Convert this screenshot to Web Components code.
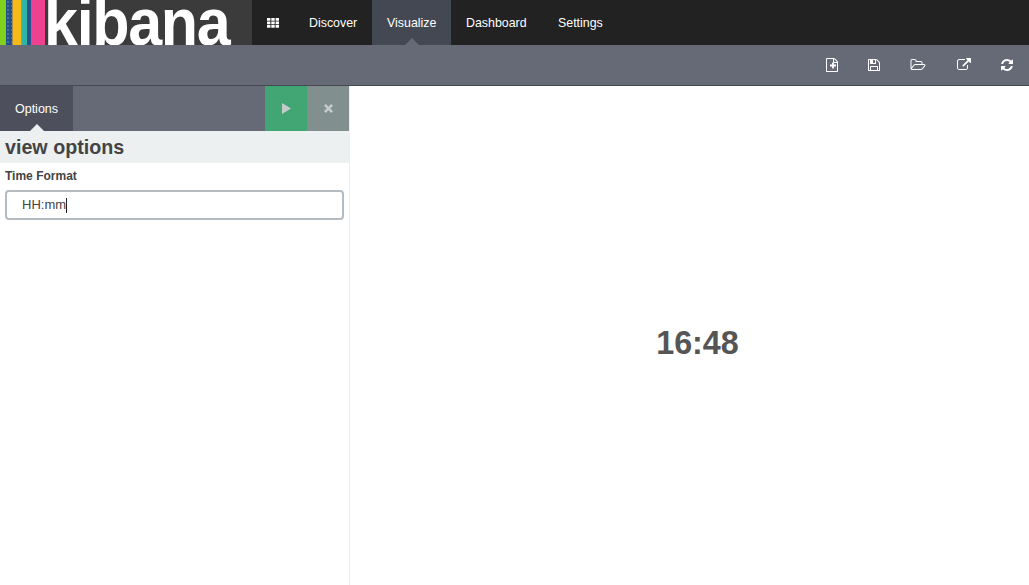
<!DOCTYPE html>
<html>
<head>
<meta charset="utf-8">
<title>Kibana</title>
<style>
  html, body { margin: 0; height: 100%; overflow: hidden; }
  body { font-family: "Liberation Sans", Arial, sans-serif; font-size: 13px; color: #444; background: #fff; }
</style>
</head>
<body>
<kbn-app>
  <kbn-navbar slot="top">
    <kbn-nav-link style="width:48px">Discover</kbn-nav-link>
    <kbn-nav-link style="width:49px" active>Visualize</kbn-nav-link>
    <kbn-nav-link style="width:62px">Dashboard</kbn-nav-link>
    <kbn-nav-link style="width:45px">Settings</kbn-nav-link>
  </kbn-navbar>
  <kbn-toolbar slot="top"></kbn-toolbar>
  <kbn-sidebar slot="side">
    <kbn-field label="Time Format" value="HH:mm"></kbn-field>
  </kbn-sidebar>
  <kbn-metric slot="main">16:48</kbn-metric>
</kbn-app>

<script>
  // toolbar glyphs, 1792 units high, width comes from the viewBox
  const ICONS = {
    add: { w: 1792, d: `<path d="M1596 380q28 28 48 76t20 88v1152q0 40-28 68t-68 28h-1344q-40 0-68-28t-28-68v-1600q0-40 28-68t68-28h896q40 0 88 20t76 48zm-444-244v376h376q-10-29-22-41l-313-313q-12-12-41-22zm384 1528v-1024h-416q-40 0-68-28t-28-68v-416h-768v1536h1280z"/><path d="M910 576h230v270h270v230h-270v270H910v-270H640V846h270z"/>` },
    save: { w: 1792, d: `<path d="M512 1536h768v-384h-768v384zm896 0h128v-896q0-14-10-38.5t-20-34.5l-281-281q-10-10-34-20t-39-10v416q0 40-28 68t-68 28h-576q-40 0-68-28t-28-68v-416h-128v1280h128v-416q0-40 28-68t68-28h832q40 0 68 28t28 68v416zm-384-928v-320q0-13-9.5-22.5t-22.5-9.5h-192q-13 0-22.5 9.5t-9.5 22.5v320q0 13 9.5 22.5t22.5 9.5h192q13 0 22.5-9.5t9.5-22.5zm640 32v928q0 40-28 68t-68 28h-1344q-40 0-68-28t-28-68v-1344q0-40 28-68t68-28h928q40 0 88 20t76 48l280 280q28 28 48 76t20 88z"/>` },
    open: { w: 2048, d: `<path d="M1845 931q0-35-53-35h-1088q-40 0-85.5 21.5t-71.5 52.5l-294 363q-18 24-18 40 0 35 53 35h1088q40 0 86-22t71-53l294-363q18-22 18-39zm-1141-163h768v-160q0-40-28-68t-68-28h-576q-40 0-68-28t-28-68v-64q0-40-28-68t-68-28h-320q-40 0-68 28t-28 68v853l256-315q44-53 116-87.5t140-34.5zm1269 163q0 62-46 120l-295 363q-43 53-116 87.5t-140 34.5h-1088q-92 0-158-66t-66-158v-960q0-92 66-158t158-66h320q92 0 158 66t66 158v32h544q92 0 158 66t66 158v160h192q54 0 99 24.5t67 70.5q15 32 15 68z"/>` },
    share: { w: 1792, d: `<path d="M1408 928v320q0 119-84.5 203.5t-203.5 84.5h-832q-119 0-203.5-84.5t-84.5-203.5v-832q0-119 84.5-203.5t203.5-84.5h704q14 0 23 9t9 23v64q0 14-9 23t-23 9h-704q-66 0-113 47t-47 113v832q0 66 47 113t113 47h832q66 0 113-47t47-113v-320q0-14 9-23t23-9h64q14 0 23 9t9 23zm384-864v512q0 26-19 45t-45 19-45-19l-176-176-652 652q-10 10-23 10t-23-10l-114-114q-10-10-10-23t10-23l652-652-176-176q-19-19-19-45t19-45 45-19h512q26 0 45 19t19 45z"/>` },
    reload: { w: 1792, d: `<path d="M1639 1056q0 5-1 7-64 268-268 434.5t-478 166.5q-146 0-282.5-55t-243.5-157l-129 129q-19 19-45 19t-45-19-19-45v-448q0-26 19-45t45-19h448q26 0 45 19t19 45-19 45l-137 137q71 66 161 102t187 36q134 0 250-65t186-179q11-17 53-117 8-23 30-23h192q13 0 22.5 9.5t9.5 22.5zm25-800v448q0 26-19 45t-45 19h-448q-26 0-45-19t-19-45 19-45l138-138q-148-137-349-137-134 0-250 65t-186 179q-11 17-53 117-8 23-30 23h-199q-13 0-22.5-9.5t-9.5-22.5v-7q65-268 270-434.5t480-166.5q146 0 284 55.5t245 156.5l130-129q19-19 45-19t45 19 19 45z"/>` }
  };

  customElements.define("kbn-icon", class KbnIcon extends HTMLElement {
    connectedCallback() {
      const icon = ICONS[this.getAttribute("name")];
      this.attachShadow({mode: "open"});
      this.shadowRoot.innerHTML = `
        <style>:host { display: block; }
        svg { display: block; fill: currentColor; }</style>
        <svg width="${icon.w / 128}" height="14" viewBox="0 0 ${icon.w} 1792">${icon.d}</svg>`;
    }
  });

  customElements.define("kbn-app", class KbnApp extends HTMLElement {
    constructor() {
      super();
      this.attachShadow({mode: "open"});
      this.shadowRoot.innerHTML = `
        <style>
          :host { display: flex; flex-direction: column; height: 585px; }
          .body { flex: 1; display: flex; min-height: 0; }
        </style>
        <slot name="top"></slot>
        <div class="body">
          <slot name="side"></slot>
          <slot name="main"></slot>
        </div>`;
    }
  });

  customElements.define("kbn-navbar", class KbnNavbar extends HTMLElement {
    constructor() {
      super();
      this.attachShadow({mode: "open"});
      this.shadowRoot.innerHTML = `
        <style>
          :host { display: flex; height: 45px; background: #222; flex: none; }
          .logo {
            width: 252px; height: 45px; overflow: hidden; display: flex; background: #3b3b3b;
          }
          .stripes { width: 45px; flex: none; display: flex; }
          .stripes i { display: block; height: 45px; }
          .stripes .dots {
            background-color: #22508a;
            background-image: radial-gradient(circle, #5f83ad 0.5px, transparent 1px);
            background-size: 4px 4px;
          }
          .word {
            display: block; font: bold 61px/45px "Liberation Sans", Arial, sans-serif; color: #fff;
            letter-spacing: -1.3px; height: 45px; margin: 2px 0 0 -1px;
            transform: scaleY(1.08); transform-origin: 0 100%;
          }
          .apps { width: 42px; display: flex; align-items: center; justify-content: center; }
          .apps svg { display: block; fill: #fff; }
          nav { display: flex; }
        </style>
        <div class="logo">
          <div class="stripes">
            <i style="width:6px;background:#80d01c"></i>
            <i class="dots" style="width:6px"></i>
            <i style="width:1px;background:#a58a45"></i>
            <i style="width:8px;background:#f5b91a"></i>
            <i style="width:1px;background:#7fa56a"></i>
            <i style="width:5px;background:#2fb5a6"></i>
            <i style="width:4px;background:#27548c"></i>
            <i style="width:14px;background:#ee4290"></i>
          </div>
          <span class="word">kibana</span>
        </div>
        <div class="apps">
          <svg width="12" height="10" viewBox="0 0 12 10">
            <path d="M0 0h3.4v2.8H0zM4.3 0h3.4v2.8H4.3zM8.6 0H12v2.8H8.6zM0 3.5h3.4v2.8H0zM4.3 3.5h3.4v2.8H4.3zM8.6 3.5H12v2.8H8.6zM0 7h3.4v2.8H0zM4.3 7h3.4v2.8H4.3zM8.6 7H12v2.8H8.6z"/>
          </svg>
        </div>
        <nav><slot></slot></nav>`;
    }
  });

  customElements.define("kbn-nav-link", class KbnNavLink extends HTMLElement {
    constructor() {
      super();
      this.attachShadow({mode: "open"});
      this.shadowRoot.innerHTML = `
        <style>
          :host {
            display: block; position: relative; padding: 0 15px; height: 45px; line-height: 46px;
            font-size: 12.4px; color: #fff; cursor: pointer; white-space: nowrap;
          }
          :host([active]) { background: #444852; }
          :host([active])::after {
            content: ""; position: absolute; left: 50%; bottom: 0; margin-left: -7px;
            border: 7px solid transparent; border-top: 0; border-bottom-color: #656a76;
          }
        </style>
        <slot></slot>`;
    }
  });

  customElements.define("kbn-toolbar", class KbnToolbar extends HTMLElement {
    constructor() {
      super();
      this.attachShadow({mode: "open"});
      this.shadowRoot.innerHTML = `
        <style>
          :host {
            display: flex; justify-content: flex-end; align-items: center; flex: none;
            box-sizing: border-box; height: 41px; background: #656a76; color: #fff;
            border-bottom: 1px solid #444852; padding: 0 15px 1px 0; gap: 30px;
          }
        </style>
        <kbn-icon name="add" style="margin-right:-2px"></kbn-icon>
        <kbn-icon name="save" style="margin-right:-1px"></kbn-icon>
        <kbn-icon name="open" style="margin-right:1px"></kbn-icon>
        <kbn-icon name="share" style="margin-right:-1px"></kbn-icon>
        <kbn-icon name="reload"></kbn-icon>`;
    }
  });

  customElements.define("kbn-sidebar", class KbnSidebar extends HTMLElement {
    constructor() {
      super();
      this.attachShadow({mode: "open"});
      this.shadowRoot.innerHTML = `
        <style>
          :host { display: flex; flex-direction: column; width: 349px; flex: none; border-right: 1px solid #ecf0f1; }
          .tabs { display: flex; height: 45px; background: #656a76; }
          .tab {
            position: relative; width: 73px; background: #4d505c; color: #fff;
            text-align: center; line-height: 46px; font-size: 12.5px;
          }
          .tab::after {
            content: ""; position: absolute; left: 50%; bottom: 0; margin-left: -7px;
            border: 7px solid transparent; border-top: 0; border-bottom-color: #ecf0f1;
          }
          .spacer { flex: 1; }
          .btn { width: 42px; display: flex; align-items: center; justify-content: center; }
          .run { background: #41a574; }
          .close { background: #81908f; }
          svg { display: block; fill: #c5cbcb; }
          h2 {
            margin: 0; height: 32px; line-height: 33px; padding-left: 5px;
            background: #ecf0f1; color: #444; font-size: 19.7px; font-weight: bold;
          }
          .content { padding: 5px; }
        </style>
        <div class="tabs">
          <div class="tab">Options</div>
          <div class="spacer"></div>
          <div class="btn run">
            <svg width="9" height="11" viewBox="0 0 9 11"><path d="M0 0l9 5.5-9 5.5z"/></svg>
          </div>
          <div class="btn close">
            <svg width="9" height="9" viewBox="0 0 10 10"><path d="M2 0l3 3 3-3 2 2-3 3 3 3-2 2-3-3-3 3-2-2 3-3-3-3z"/></svg>
          </div>
        </div>
        <h2>view options</h2>
        <div class="content"><slot></slot></div>`;
    }
  });

  customElements.define("kbn-field", class KbnField extends HTMLElement {
    constructor() {
      super();
      this.attachShadow({mode: "open"});
      this.shadowRoot.innerHTML = `
        <style>
          :host { display: block; }
          label { display: block; font-size: 12px; font-weight: bold; color: #444; line-height: 17px; margin-bottom: 5px; }
          .input {
            box-sizing: border-box; height: 30px; border: 2px solid #b4bcc2; border-radius: 4px;
            padding-left: 15px; line-height: 26px; font-size: 13px; color: #444; display: flex; align-items: center;
          }
          .caret { display: block; width: 1px; height: 15px; background: #222; }
        </style>
        <label></label>
        <div class="input"><span class="val"></span><span class="caret"></span></div>`;
    }
    connectedCallback() {
      this.shadowRoot.querySelector("label").textContent = this.getAttribute("label");
      this.shadowRoot.querySelector(".val").textContent = this.getAttribute("value");
    }
  });

  customElements.define("kbn-metric", class KbnMetric extends HTMLElement {
    constructor() {
      super();
      this.attachShadow({mode: "open"});
      this.shadowRoot.innerHTML = `
        <style>
          :host {
            flex: 1; display: flex; align-items: center; justify-content: center;
            font-size: 32.3px; font-weight: bold; color: #555;
            padding: 16px 0 0 16px;
          }
        </style>
        <slot></slot>`;
    }
  });
</script>
</body>
</html>
